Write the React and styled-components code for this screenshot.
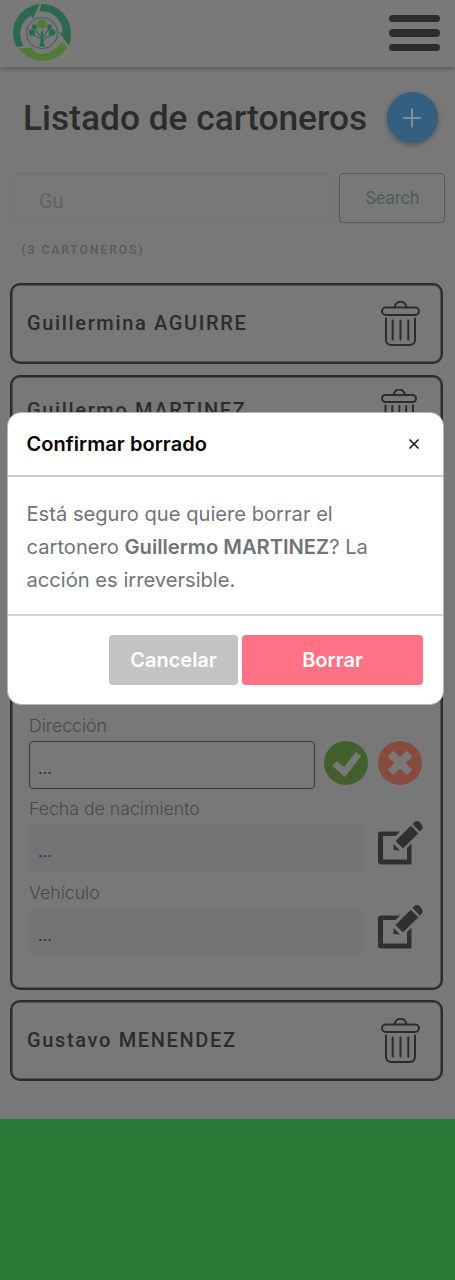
import React from 'react';
import styled, { createGlobalStyle } from 'styled-components';

const GlobalStyle = createGlobalStyle`
  * { box-sizing: border-box; }
  body { margin: 0; background: #2b7a38; }
  button, input { font: inherit; margin: 0; }
`;

const ink = '#2c2c2c';

const Screen = styled.div`
  position: relative;
  height: 1119px;
  background: #787878;
  color: ${ink};
  font-family: Roboto, sans-serif;
`;

const Header = styled.header`
  display: flex;
  align-items: center;
  justify-content: space-between;
  height: 67px;
  padding: 0 15px 1px 12px;
  background: #797979;
  box-shadow: 0 1px 5px rgba(0, 0, 0, 0.35);
`;

const MenuButton = styled.button`
  display: flex;
  flex-direction: column;
  gap: 7px;
  width: 51px;
  padding: 0;
  border: 0;
  background: none;
`;

const MenuBar = styled.span`
  height: 7.6px;
  border-radius: 4px;
  background: ${ink};
`;

const TitleRow = styled.div`
  display: flex;
  align-items: center;
  justify-content: space-between;
  height: 51px;
  margin: 25px 17.5px 0 23px;
`;

const Title = styled.h1`
  margin: 0;
  padding-top: 1px;
  font-size: 35.3px;
  font-weight: 500;
  line-height: 50px;
  white-space: nowrap;
`;

const AddButton = styled.button`
  display: grid;
  place-items: center;
  width: 51px;
  height: 51px;
  padding: 0;
  border: 0;
  border-radius: 50%;
  background: #355f80;
  box-shadow: 0 2px 5px rgba(0, 0, 0, 0.3);
`;

const SearchRow = styled.form`
  display: flex;
  gap: 8px;
  height: 50px;
  margin: 30px 10px 0 11px;
`;

const SearchInput = styled.input`
  width: 320px;
  padding: 5px 27px 0;
  border: 1px solid #727273;
  border-radius: 4px;
  background: transparent;
  color: #606268;
  font-size: 20px;
`;

const SearchButton = styled.button`
  flex: 1;
  padding: 0 0 0 1px;
  border: 1.5px solid #46634f;
  border-radius: 4px;
  background: transparent;
  color: #466350;
  font-size: 17.6px;
`;

const Count = styled.p`
  margin: 18px 0 0 21.5px;
  color: #5a5a5a;
  font-size: 12.2px;
  font-weight: 500;
  line-height: 18px;
  letter-spacing: 1.9px;
`;

const List = styled.div`
  display: flex;
  flex-direction: column;
  gap: 10.5px;
  margin: 24px 12px 0 10px;
`;

const Card = styled.section`
  display: flex;
  flex-direction: column;
  justify-content: space-between;
  height: ${(p) => p.$height || 81}px;
  border: 2px solid ${ink};
  border-radius: 10px;
  box-shadow: inset 0 0 0 0.5px ${ink};
`;

const CardHeader = styled.div`
  display: flex;
  align-items: center;
  justify-content: space-between;
  height: ${(p) => p.$height || 76}px;
  padding: 0 21.5px 0 15px;
`;

const Name = styled.h2`
  margin: 0;
  font-size: 20px;
  font-weight: 500;
  letter-spacing: 1.65px;
  white-space: nowrap;
`;

const Fields = styled.div`
  display: flex;
  flex-direction: column;
  gap: 8.5px;
  padding: 0 19px 32px 17px;
  font-family: Inter, sans-serif;
`;

const FieldLabel = styled.label`
  display: block;
  height: 27px;
  color: #48484a;
  font-size: 17.7px;
  font-weight: 300;
  line-height: 23px;
`;

const FieldRow = styled.div`
  display: flex;
  justify-content: space-between;
  height: 48px;
`;

const FieldValue = styled.div`
  width: ${(p) => (p.$editing ? 286 : 334)}px;
  padding: 5px 8px 0;
  border: 1.5px solid ${(p) => (p.$editing ? '#3a3a3a' : '#747577')};
  border-radius: 4px;
  background: ${(p) => (p.$editing ? 'transparent' : '#737476')};
  color: #303030;
  font-size: 16px;
  line-height: 43px;
`;

const Actions = styled.div`
  display: flex;
  gap: 10px;
  height: 44px;
`;

const EditIcon = styled.svg`
  flex: none;
  margin: -4px -1px 0 0;
`;

const Overlay = styled.div`
  position: absolute;
  inset: 0;
  display: flex;
  align-items: center;
  padding: 0 11.5px 3px 6.5px;
  font-family: Inter, sans-serif;
`;

const Dialog = styled.div`
  width: 437px;
  height: 293px;
  border: 1px solid #b4b4b4;
  border-radius: 14px;
  background: #fff;
`;

const DialogHeader = styled.div`
  display: flex;
  align-items: center;
  justify-content: space-between;
  height: 64px;
  padding: 0 22px 0 19px;
  border-bottom: 2px solid #cbcbcc;
`;

const DialogTitle = styled.h3`
  margin: 0;
  color: #050505;
  font-size: 20px;
  font-weight: 600;
  letter-spacing: 0.05px;
`;

const CloseButton = styled.button`
  display: grid;
  padding: 0;
  border: 0;
  background: none;
`;

const DialogBody = styled.div`
  height: 139px;
  padding: 20px 19px;
  border-bottom: 2px solid #d2d3d4;
  color: #70747a;
  font-size: 20.15px;
  line-height: 33px;
  white-space: nowrap;
`;

const Strong = styled.strong`
  font-weight: 600;
`;

const DialogFooter = styled.div`
  display: flex;
  justify-content: flex-end;
  gap: 4px;
  padding: 19.5px 19.5px 0;
`;

const DialogButton = styled.button`
  width: ${(p) => p.$width}px;
  height: 50px;
  padding: 0;
  border: 0;
  border-radius: 4px;
  background: ${(p) => p.$color};
  color: #fff;
  font-size: 20px;
  font-weight: 600;
`;

const Logo = () => (
  <svg width="60" height="60" viewBox="0 0 60 60">
    <g fill="#2b694d">
      <path d="M4.6 44A29 29 0 0 1 27.6 1.1L20.6 16L19.4 12.2A21.5 21.5 0 0 0 11.5 42.7Z" />
      <path d="M29.5 1A29 29 0 0 1 58.9 31Q59 37 56.9 42.5L46.8 29L50.8 30A21 21 0 0 0 27.3 8.5Z" />
    </g>
    <path d="M6.7 45.2L21.3 44.7L20.3 47.2L25 50.5Q39 53.500 49.700 39L55 44.500A29 29 0 0 1 6.700 45.200Z" fill="#527a36" />
    <circle cx="30" cy="30" r="15.6" fill="none" stroke="#415b62" strokeWidth="1" />
    <g fill="none" stroke="#2b694d" strokeWidth="1.2">
      <path d="M30 27V43M30 35.500Q24 35 20 30M30 35.500Q36 35 40 30M29 34L23 26M31 34L37 26" />
    </g>
    <path d="M29 29H31L31.500 39L33 43.500H27L28.500 39Z" fill="#2b694d" />
    <circle cx="30" cy="21" r="4.800" fill="#527a36" />
    <g fill="#2b694d">
      <circle cx="20" cy="29.500" r="3.200" />
      <circle cx="40" cy="29.500" r="3.200" />
      <circle cx="22.500" cy="23.800" r="2.500" />
      <circle cx="37.500" cy="23.800" r="2.500" />
    </g>
  </svg>
);

const Trash = () => (
  <svg width="39" height="45" viewBox="0 0 39 45" fill="none" stroke={ink} strokeWidth="2" strokeLinecap="round">
    <path d="M13.700 6.500A5.800 5.800 0 0 1 25.300 6.500" />
    <rect x="1" y="6.500" width="37" height="7.500" rx="3.750" />
    <path d="M5 17.500V38.500Q5 44 10.500 44H28.500Q34 44 34 38.500V17.500M11.700 19.500V38.500M19.500 19.500V38.500M27.300 19.500V38.500" />
  </svg>
);

const TrashRibbed = () => (
  <svg width="39" height="43" viewBox="0 0 39 43" fill="none" stroke={ink} strokeWidth="2" strokeLinecap="round">
    <path d="M12.800 6A5.500 5.500 0 0 1 23.800 6" />
    <rect x="1" y="6" width="34" height="7" rx="3.500" />
    <path d="M4.500 16.500V36Q4.500 41 9.500 41H27Q32 41 32 36V16.500M11.300 17V36M18.300 17V36M25.200 17V36" />
  </svg>
);

const Pencil = () => (
  <EditIcon width="45" height="46" viewBox="0 0 45 46" fill="#303030">
    <path d="M22 11.500L17.500 16H5V39.500H29V28L33.500 23.500V44.500H3Q0 44.500 0 41.500V14Q0 11.500 3 11.500Z" />
    <path d="M15.500 24L22 30.500L15.500 30Z" />
    <path d="M17.500 21L32.800 5.700L40.300 13.200L25 28.500Z" />
    <path d="M34.500 4L36.800 1.700Q39 0 42 2.500Q45.500 6 44.300 9L41.800 11.500Z" />
  </EditIcon>
);

const Accept = () => (
  <svg width="44" height="44" viewBox="0 0 44 44">
    <circle cx="22" cy="22" r="22" fill="#42602e" />
    <path d="M10.500 22.500L20.500 31L34.500 13" fill="none" stroke="#787878" strokeWidth="6.800" />
  </svg>
);

const Reject = () => (
  <svg width="44" height="44" viewBox="0 0 44 44">
    <circle cx="22" cy="22" r="22" fill="#874b3d" />
    <path d="M12.500 12.500L31.500 31.500M31.500 12.500L12.500 31.500" stroke="#7b7776" strokeWidth="8" />
  </svg>
);

const Field = ({ label, editing }) => (
  <div>
    <FieldLabel>{label}</FieldLabel>
    <FieldRow>
      <FieldValue $editing={editing}>...</FieldValue>
      {editing ? <Actions><Accept /><Reject /></Actions> : <Pencil />}
    </FieldRow>
  </div>
);

export default function App() {
  return (
    <Screen>
      <GlobalStyle />
      <Header>
        <Logo />
        <MenuButton aria-label="Menú"><MenuBar /><MenuBar /><MenuBar /></MenuButton>
      </Header>
      <TitleRow>
        <Title>Listado de cartoneros</Title>
        <AddButton aria-label="Agregar">
          <svg width="18" height="20" viewBox="0 0 18 20" stroke="#858b90" strokeWidth="2">
            <path d="M9 .5V19.500M0 10H18" />
          </svg>
        </AddButton>
      </TitleRow>
      <SearchRow>
        <SearchInput defaultValue="Gu" />
        <SearchButton type="button">Search</SearchButton>
      </SearchRow>
      <Count>(3 CARTONEROS)</Count>
      <List>
        <Card>
          <CardHeader><Name>Guillermina AGUIRRE</Name><Trash /></CardHeader>
        </Card>
        <Card $height={615}>
          <CardHeader $height={67}><Name>Guillermo MARTINEZ</Name><TrashRibbed /></CardHeader>
          <Fields>
            <Field label="Dirección" editing />
            <Field label="Fecha de nacimiento" />
            <Field label="Vehículo" />
          </Fields>
        </Card>
        <Card>
          <CardHeader><Name>Gustavo MENENDEZ</Name><Trash /></CardHeader>
        </Card>
      </List>
      <Overlay>
        <Dialog role="dialog">
          <DialogHeader>
            <DialogTitle>Confirmar borrado</DialogTitle>
            <CloseButton aria-label="Cerrar">
              <svg width="14" height="12" viewBox="0 0 14 12" stroke="#111" strokeWidth="1.500">
                <path d="M2.500 1.500L11.500 10.500M11.500 1.500L2.500 10.500" />
              </svg>
            </CloseButton>
          </DialogHeader>
          <DialogBody>
            Está seguro que quiere borrar el<br />
            cartonero <Strong>Guillermo MARTINEZ</Strong>? La<br />
            acción es irreversible.
          </DialogBody>
          <DialogFooter>
            <DialogButton $width={129} $color="#c3c3c3">Cancelar</DialogButton>
            <DialogButton $width={181} $color="#ff7184">Borrar</DialogButton>
          </DialogFooter>
        </Dialog>
      </Overlay>
    </Screen>
  );
}
